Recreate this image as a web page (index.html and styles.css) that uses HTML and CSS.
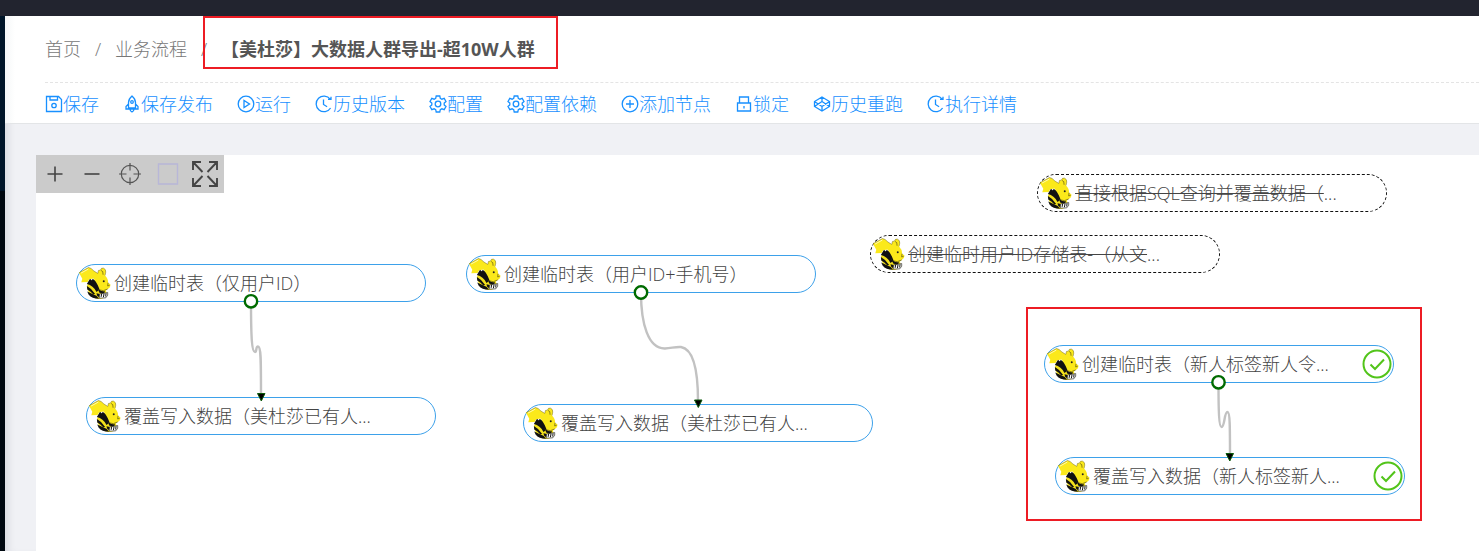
FILE: index.html
```html
<!DOCTYPE html>
<html lang="zh-CN">
<head>
<meta charset="utf-8">
<title>业务流程</title>
<link rel="stylesheet" href="styles.css">
</head>
<body>
<svg class="defs" aria-hidden="true">
  <symbol id="bee" viewBox="0 0 100 102">
    <path d="M34 44L62 66L84 74L90 88Q72 104 52 97Q30 88 27 60Z" fill="#f3e11c"/>
    <path d="M36 38Q54 50 62 74L56 78Q46 58 27 54ZM27 60Q42 68 52 84L46 85Q38 76 28 71ZM28 77Q42 84 56 90L64 99Q42 99 32 86ZM44 38L62 50L70 72L82 76L78 84L64 80Q60 62 42 46ZM56 82L66 84L64 94L58 90Z" fill="#111"/>
    <path d="M66 84L90 80L90 88L84 96L64 97Z" fill="#fff" stroke="#222" stroke-width="2"/>
    <path d="M72 83L70 93M79 83L77 94M85 82L84 92" stroke="#111" stroke-width="3"/>
    <path d="M3 20L32 4Q42 6 47 14L60 22L62 13L68 12Q70 4 77 6Q85 9 84 18L82 28Q92 38 91 50L98 55Q99 66 90 69L83 75Q74 78 66 72L60 58Q54 46 47 37L34 40L29 48L10 49L13 38Z" fill="#fbe91b"/>
    <path d="M3 20L32 4Q42 6 47 14L60 22L62 13L68 12Q70 4 77 6Q85 9 84 18L82 28" fill="none" stroke="#6e6516" stroke-width="1.500"/>
    <path d="M70 13Q77 14 76 26M91 50L90 60L96 58M66 72Q76 78 90 69" fill="none" stroke="#544d12" stroke-width="2"/>
    <path d="M9 21L31 9" stroke="#fffbb0" stroke-width="3"/>
    <circle cx="78" cy="46" r="3" fill="#222"/>
  </symbol>
  <symbol id="gear" viewBox="0 0 18 18"><path d="M7.2 1h3.6l.5 2.3 1.6.9 2.3-.8 1.8 3.1-1.8 1.6v1.8l1.8 1.6-1.8 3.1-2.3-.8-1.6.9-.5 2.3H7.2l-.5-2.3-1.6-.9-2.3.8L1 11.5l1.8-1.6V8.1L1 6.500l1.8-3.1 2.3.8 1.6-.9z"/><circle cx="9" cy="9" r="2.8"/></symbol>
  <symbol id="history" viewBox="0 0 18 18"><path d="M15.2 4.2A7.8 7.8 0 1 0 15.6 13M13 4.4h3V1.8M8.500 4.500v5l3.600 2.200"/></symbol>
  <symbol id="check" viewBox="0 0 30 30"><circle cx="15" cy="15" r="13.500"/><path d="M8.500 15.500L13 20L22 10.500"/></symbol>
</svg>

<div class="topbar"></div>
<div class="shell">
  <aside class="rail"></aside>
  <div class="content">
    <header class="header">
      <nav class="breadcrumb" aria-label="面包屑">
        <a href="#">首页</a><span class="sep">/</span><a href="#">业务流程</a><span class="sep">/</span><strong>【美杜莎】大数据人群导出-超10W人群</strong>
        <span class="mark mark-title"></span>
      </nav>
      <div class="actions">
        <button type="button"><svg viewBox="0 0 18 18"><path d="M1.500 1.500h12l3 3v12h-15zM5 1.500v3.500h7.500V1.500"/><circle cx="9" cy="10.500" r="2.200"/></svg>保存</button>
        <button type="button"><svg viewBox="0 0 18 18"><path d="M9 1Q5.500 4 5.500 7.500V13h7V7.500Q12.500 4 9 1zM5.500 9L3 11.500V14h12v-2.500L12.500 9M7 14q0 2 2 3q2-1 2-3"/><circle cx="9" cy="7" r="1.300"/></svg>保存发布</button>
        <button type="button"><svg viewBox="0 0 18 18"><circle cx="9" cy="9" r="7.800"/><path d="M7 5.500v7L12.500 9z"/></svg>运行</button>
        <button type="button"><svg><use href="#history"/></svg>历史版本</button>
        <button type="button"><svg><use href="#gear"/></svg>配置</button>
        <button type="button"><svg><use href="#gear"/></svg>配置依赖</button>
        <button type="button"><svg viewBox="0 0 18 18"><circle cx="9" cy="9" r="7.800"/><path d="M9 5v8M5 9h8"/></svg>添加节点</button>
        <button type="button"><svg viewBox="0 0 18 18"><path d="M2.500 8h13v8h-13zM4.500 8V2h9v6M9 11v2.500"/></svg>锁定</button>
        <button type="button"><svg viewBox="0 0 18 18"><path d="M9 2l7.500 4.500v5L9 16l-7.500-4.500v-5zM9 2v4.500M9 11.500V16M1.500 6.500L9 11.500l7.500-5M1.500 11.500L9 6.500l7.500 5"/></svg>历史重跑</button>
        <button type="button"><svg><use href="#history"/></svg>执行详情</button>
      </div>
    </header>

    <main class="canvas">
      <div class="tools">
        <button type="button" aria-label="放大"><svg viewBox="0 0 28 28"><path d="M14 6.500v15M6.500 14h15"/></svg></button>
        <button type="button" aria-label="缩小"><svg viewBox="0 0 28 28"><path d="M6.500 14h15"/></svg></button>
        <button type="button" aria-label="定位"><svg class="thin" viewBox="0 0 28 28"><circle cx="14" cy="14" r="8.700"/><path d="M14 3v7.500M14 17.500V25M3 14h7.500M17.500 14H25"/></svg></button>
        <button type="button" aria-label="框选"><svg class="pale" viewBox="0 0 28 28"><path d="M4.500 4h19v20h-19z"/></svg></button>
        <button type="button" aria-label="全屏"><svg class="bold" viewBox="0 0 28 28"><path d="M2 10V2h8M2 2l9.500 10M18 2h8v8M26 2l-9.500 10M2 18v8h8M2 26l9.500-10M18 26h8v-8M26 26l-9.500-10"/></svg></button>
      </div>

      <div class="node n1"><svg class="bee"><use href="#bee"/></svg><span>创建临时表（仅用户ID）</span></div>
      <div class="node n2"><svg class="bee"><use href="#bee"/></svg><span>覆盖写入数据（美杜莎已有人...</span></div>
      <div class="node n3"><svg class="bee"><use href="#bee"/></svg><span>创建临时表（用户ID+手机号）</span></div>
      <div class="node n4"><svg class="bee"><use href="#bee"/></svg><span>覆盖写入数据（美杜莎已有人...</span></div>
      <div class="node off n5"><svg class="bee"><use href="#bee"/></svg><span><s>直接根据SQL查询并覆盖数据（</s>...</span></div>
      <div class="node off n6"><svg class="bee"><use href="#bee"/></svg><span><s>创建临时用户ID存储表-（从文</s>...</span></div>
      <div class="node n7"><svg class="bee"><use href="#bee"/></svg><span>创建临时表（新人标签新人令...</span><svg class="ok"><use href="#check"/></svg></div>
      <div class="node n8"><svg class="bee"><use href="#bee"/></svg><span>覆盖写入数据（新人标签新人...</span><svg class="ok"><use href="#check"/></svg></div>

      <svg class="links" aria-hidden="true">
        <g class="wire">
          <path d="M215 147C215 184 216 197 219 197C221 197 219.500 191.500 222 191.500C225 191.500 225 203 225 240"/>
          <path d="M605 138C605 168 612 194 629 193.500C636 193 640 191.500 645 192C657 194 662 214 662 246"/>
          <path d="M1182.500 228C1182.500 256 1183 272 1185.500 272C1189 272 1188 257 1191.500 257C1194 257 1194 272 1194 300"/>
        </g>
        <g class="tip">
          <path d="M221.500 238.500h7.500l-3.700 7.500z"/>
          <path d="M658.500 245h7.500l-3.700 7.500z"/>
          <path d="M1190 298.500h7.500l-3.700 7.500z"/>
        </g>
        <g class="port">
          <circle cx="215" cy="146.300" r="6.200"/>
          <circle cx="605" cy="137.500" r="6.200"/>
          <circle cx="1182.500" cy="227.300" r="6.200"/>
        </g>
      </svg>
      <span class="mark mark-flow"></span>
    </main>
  </div>
</div>
</body>
</html>
```
FILE: styles.css
```css
* { box-sizing: border-box; }
body {
  margin: 0;
  min-height: 100vh;
  display: flex;
  flex-direction: column;
  overflow: hidden;
  background: #f0f1f5;
  color: #444;
  font: 300 18px/26px "Open Sans", "Noto Sans CJK SC", sans-serif;
}
button {
  margin: 0;
  padding: 0;
  border: 0;
  background: none;
  font: inherit;
  color: inherit;
  cursor: pointer;
}
.defs { position: absolute; width: 0; height: 0; }
.topbar { height: 16px; background: #22242f; }
.shell { flex: 1; display: flex; }
.rail {
  width: 5px;
  background: linear-gradient(#001529 175px, #000810 175px);
}
.content {
  flex: 1;
  min-width: 0;
  display: flex;
  flex-direction: column;
  box-shadow: inset 8px 0 10px -6px rgba(0, 21, 41, .12);
}
.header {
  padding: 20px 0 6px 40px;
  background: linear-gradient(90deg, #f5f7f8, #fff 10px);
  border-bottom: 1px solid #e3e5e7;
}
.breadcrumb {
  position: relative;
  display: flex;
  height: 47px;
  border-bottom: 1px dashed #e4e4e4;
  color: #777;
  white-space: nowrap;
}
.breadcrumb a { color: inherit; text-decoration: none; }
.breadcrumb .sep { width: 34px; text-align: center; }
.breadcrumb strong { font-weight: 700; color: #555; }
.actions {
  display: flex;
  gap: 24px;
  padding-top: 8px;
  color: #1890ff;
  white-space: nowrap;
}
.actions button { display: flex; align-items: center; }
.actions svg {
  width: 18px;
  height: 18px;
  fill: none;
  stroke: currentColor;
  stroke-width: 1.3;
}
.canvas {
  position: relative;
  flex: 1;
  margin: 31px 0 0 31px;
  background: #fff;
}
.tools {
  display: flex;
  width: 188px;
  height: 38px;
  background: #cbcbcb;
}
.tools button {
  flex: 1;
  display: flex;
  align-items: center;
  justify-content: center;
}
.tools svg {
  width: 28px;
  height: 28px;
  fill: none;
  stroke: #444;
  stroke-width: 1.6;
}
.tools .thin { stroke: #555; stroke-width: 1.2; }
.tools .pale { stroke: #b8b7d8; stroke-width: 1.4; }
.tools .bold { stroke-width: 1.9; }
.node {
  position: absolute;
  display: flex;
  align-items: center;
  gap: 3px;
  width: 350px;
  height: 38px;
  padding: 0 1px;
  border: 1px solid #3da1ea;
  border-radius: 19px;
  background: #fff;
  white-space: nowrap;
}
.node.off { border: 1px dashed #111; }
.bee { width: 33px; height: 34px; }
.ok {
  width: 30px;
  height: 30px;
  margin-left: auto;
  fill: none;
  stroke: #52c41a;
  stroke-width: 2;
}
.n1 { left: 40px; top: 109px; }
.n2 { left: 50px; top: 242px; }
.n3 { left: 430px; top: 100px; }
.n4 { left: 487px; top: 249px; }
.n5 { left: 1001px; top: 19px; }
.n6 { left: 834px; top: 80px; }
.n7 { left: 1008px; top: 190px; }
.n8 { left: 1019px; top: 302px; }
.links {
  position: absolute;
  left: 0;
  top: 0;
  width: 100%;
  height: 100%;
}
.wire { fill: none; stroke: #c2c2c2; stroke-width: 2.4; }
.tip { fill: #000; stroke: #0a5a0a; stroke-width: 1; }
.port { fill: #fff; stroke: #006b00; stroke-width: 2.4; }
.mark { position: absolute; border: 2px solid #ed1c24; }
.mark-title { left: 158px; top: -20px; width: 355px; height: 53px; }
.mark-flow { left: 990px; top: 152px; width: 396px; height: 214px; }
```
